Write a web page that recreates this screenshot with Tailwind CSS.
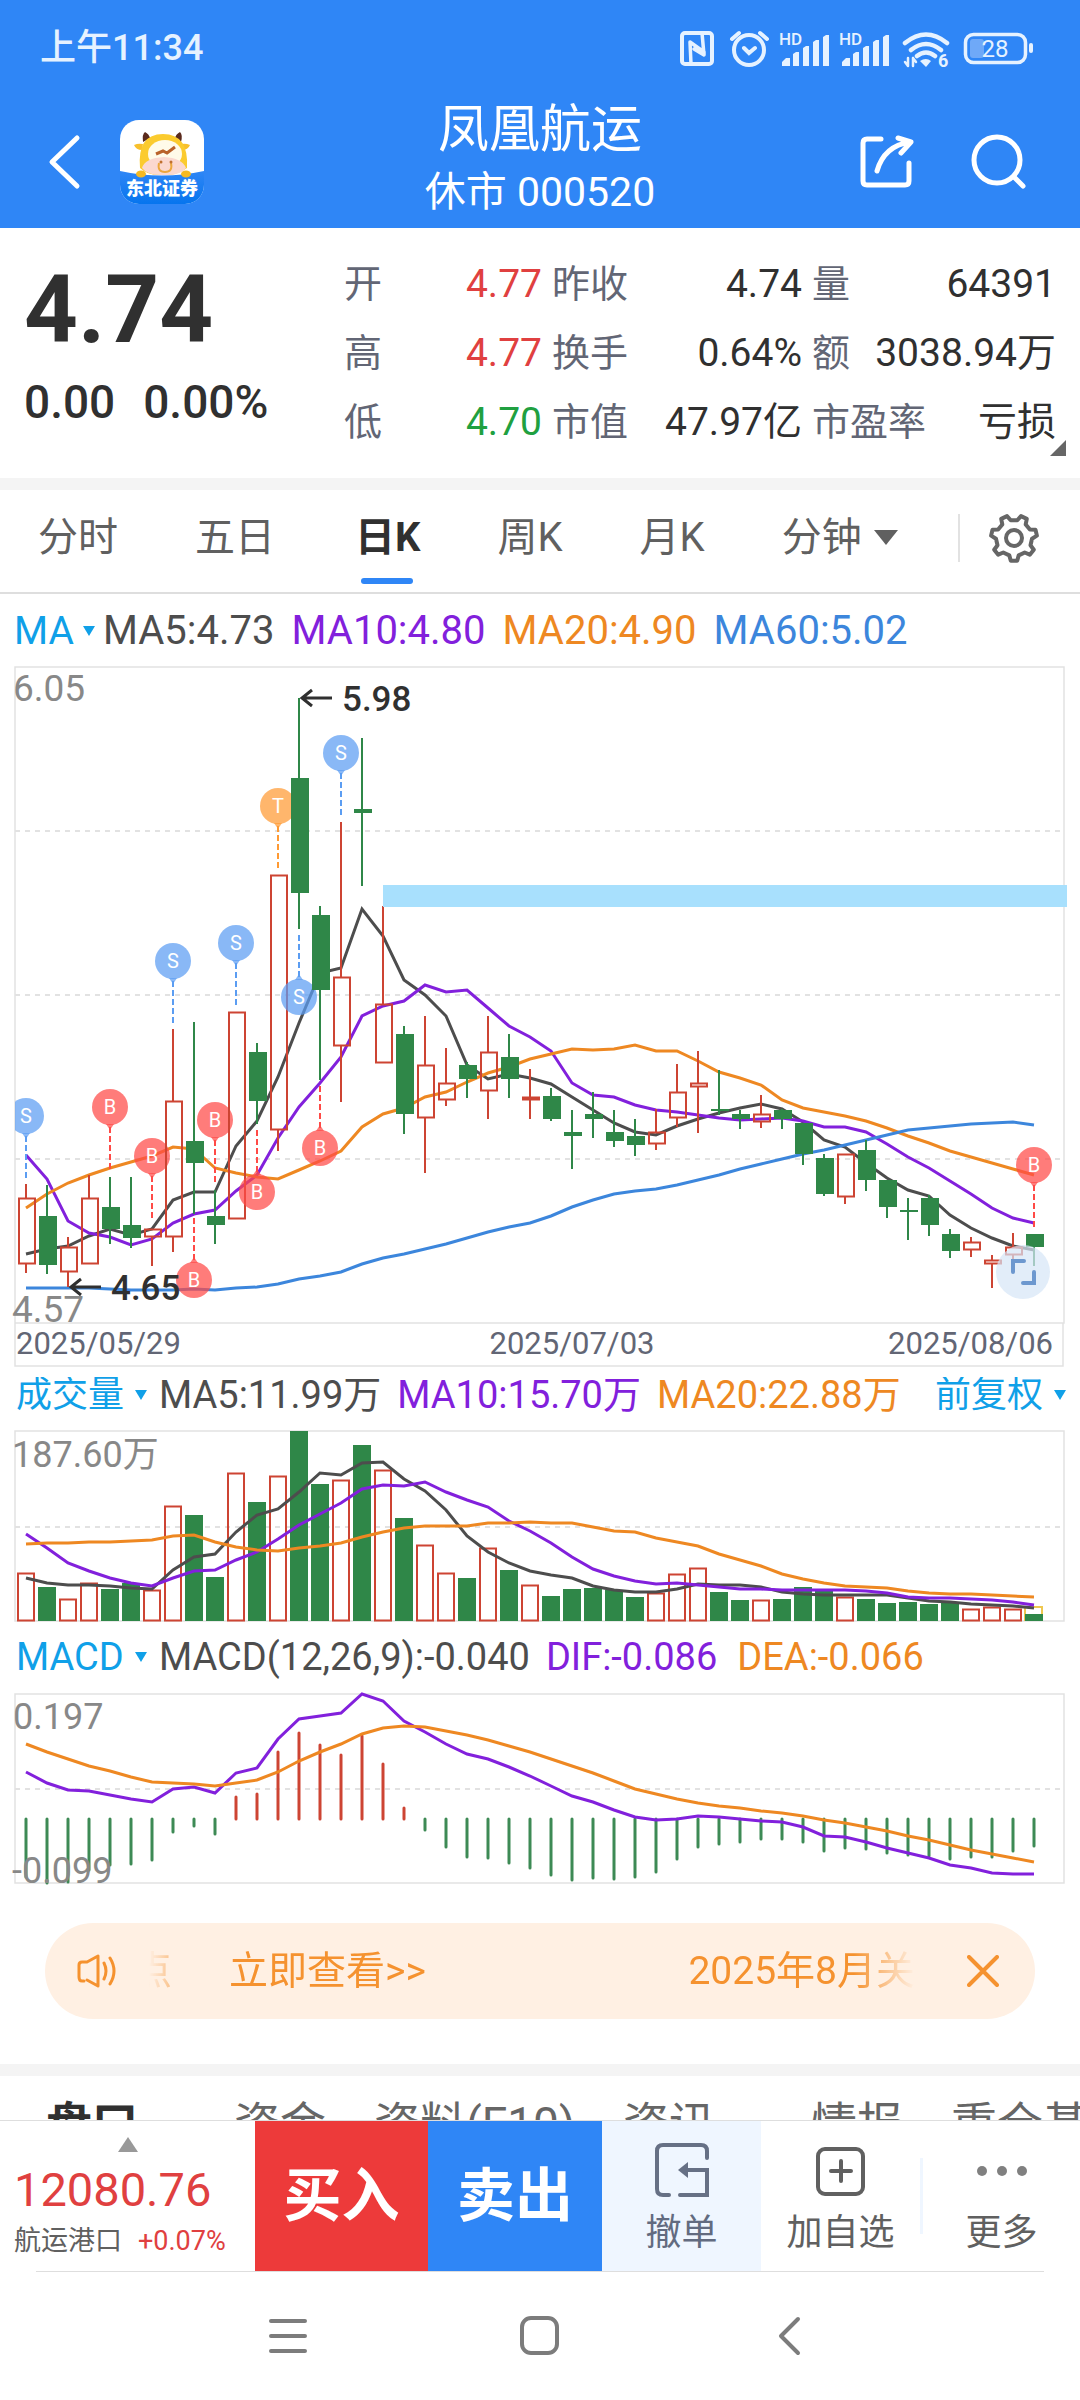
<!DOCTYPE html>
<html lang="zh-CN">
<head>
    <meta charset="UTF-8">
    <meta name="viewport" content="width=device-width, initial-scale=1.0">
    <title>凤凰航运 000520</title>
    <script src="https://cdn.jsdelivr.net/npm/@tailwindcss/browser@4"></script>
</head>
<body class="bg-white font-['Roboto','Noto_Sans_CJK_SC',sans-serif]">
<div class="h-screen flex flex-col overflow-hidden">

    <!-- Header -->
    <header class="shrink-0 bg-[#2f86f6] text-white">
        <div class="flex items-center justify-between h-24 pl-10 pr-11">
            <time class="text-4xl font-medium text-[#e6f2ff]">上午11:34</time>
            <svg class="w-[360px] h-10" viewBox="676 28 360 40" fill="none" stroke="#e6f2ff" stroke-width="4" stroke-linecap="round">
                <!-- nfc -->
                <rect x="682" y="33" width="30" height="31" rx="3"/>
                <path d="M691 64 L690 42 L704 52 L704 55 M702 33 L704 55 L694 49" stroke-linejoin="round" stroke-width="3.500"/>
                <!-- alarm -->
                <circle cx="749" cy="50" r="15"/>
                <path d="M732 39 l7-6 M767 39 l-7-6 M744 48 l5 5 l6-5"/>
                <!-- signal 1 -->
                <g id="signal" stroke="none" fill="#e6f2ff">
                    <path d="M782 66 v-4 l4-4 h4 v8z M793 66 v-12 l3-2 h3 v14z M803 66 v-18 l3-2 h3 v20z M813 66 v-24 l3-2 h3 v26z M823 66 v-29 l3-2 h3 v31z"/>
                    <text x="779" y="45" font-size="17" font-weight="500">HD</text>
                </g>
                <use href="#signal" x="60"/>
                <!-- wifi 6 -->
                <path d="M905 43 q21-17 42 0 M911 50 q15-12 30 0 M917 56 q9-7 18 0" stroke-width="4.500"/>
                <path d="M920 61 q6-4 11 0 l-5 6z" fill="#e6f2ff" stroke="none"/>
                <path d="M908 66 v-8 M908 66 l-3-4 M913 58 v8 M913 58 l3 4" stroke-width="2.500"/>
                <text x="938" y="67" font-size="18" font-weight="700" fill="#e6f2ff" stroke="none">6</text>
                <!-- battery -->
                <rect x="965.500" y="34.500" width="60" height="28" rx="8" stroke-width="3.500"/>
                <rect x="970" y="39" width="14" height="19" rx="3" fill="#6fa9f8" stroke="none"/>
                <path d="M1031 45 v6"/>
                <text x="995" y="57" font-size="24" text-anchor="middle" fill="#e6f2ff" stroke="none">28</text>
            </svg>
        </div>
        <div class="grid grid-cols-[1fr_auto_1fr] items-center h-33 px-11">
            <div class="flex items-center gap-9">
                <button aria-label="返回">
                    <svg class="w-10 h-14" viewBox="0 0 40 56" fill="none" stroke="white" stroke-width="5" stroke-linecap="round" stroke-linejoin="round"><path d="M33 4 L8 28 L33 52"/></svg>
                </button>
                <a href="#" aria-label="东北证券">
                    <svg class="w-21 h-21" viewBox="0 0 84 84">
                        <defs>
                            <clipPath id="logoClip"><rect width="84" height="84" rx="19"/></clipPath>
                            <linearGradient id="logoBlue" x2="0" y2="1"><stop offset="0" stop-color="#2f86f6"/><stop offset="1" stop-color="#0675ee"/></linearGradient>
                        </defs>
                        <g clip-path="url(#logoClip)">
                            <rect width="84" height="84" fill="white"/>
                            <path d="M0 51 Q42 60 84 51 V84 H0z" fill="url(#logoBlue)"/>
                            <path d="M23 22 Q22 14 25 12 Q29 14 30 18z M61 22 Q63 15 60 12 Q56 14 55 18z" fill="#5a2a1c"/>
                            <path d="M14 25 Q18 23 23 24 L22 30 Q16 30 14 25z M70 25 Q66 23 61 24 L62 30 Q68 30 70 25z" fill="#f8c02c"/>
                            <path d="M20 48 Q17 14 43 14 Q69 14 67 48 Q56 56 43 55 Q28 56 20 48z" fill="#fbcb2e"/>
                            <ellipse cx="45" cy="34" rx="17" ry="14" fill="#fffbe9"/>
                            <path d="M36 34 l7-3 l4 2 l8-6" stroke="#b9622a" stroke-width="3" fill="none"/>
                            <path d="M22 48 Q25 38 44 37 Q62 38 66 48 Q60 56 44 55 Q28 56 22 48z" fill="#fbd8cf"/>
                            <path d="M39 43 Q37 52 45 52 Q53 52 51 43" stroke="#eda73c" stroke-width="2" fill="none"/>
                            <circle cx="41" cy="42" r="1.500" fill="#c07030"/><circle cx="51" cy="42" r="1.500" fill="#c07030"/>
                            <ellipse cx="21" cy="54" rx="5" ry="3.500" fill="#f5b921"/><ellipse cx="66" cy="54" rx="5" ry="3.500" fill="#f5b921"/>
                            <text x="42" y="75" font-size="18" font-weight="900" fill="white" text-anchor="middle">东北证券</text>
                        </g>
                    </svg>
                </a>
            </div>
            <div class="text-center">
                <h1 class="text-[51px] leading-15">凤凰航运</h1>
                <p class="text-[41px] leading-16">休市 000520</p>
            </div>
            <div class="flex items-center justify-end gap-14 pr-2.5">
                <button aria-label="分享">
                    <svg class="w-14 h-14" viewBox="0 0 56 56" fill="none" stroke="white" stroke-width="5" stroke-linecap="round" stroke-linejoin="round">
                        <path d="M23 5 H9 Q5 5 5 9 V47 Q5 51 9 51 H47 Q51 51 51 47 V29"/>
                        <path d="M19 37 Q26 12 52 8 M40 4 L53 8 L43 19"/>
                    </svg>
                </button>
                <button aria-label="搜索">
                    <svg class="w-14 h-14" viewBox="0 0 56 56" fill="none" stroke="white" stroke-width="5" stroke-linecap="round"><circle cx="27" cy="26" r="23"/><path d="M44 43 L53 52"/></svg>
                </button>
            </div>
        </div>
    </header>

    <main class="flex-1 min-h-0 overflow-y-auto [scrollbar-width:none]">

        <!-- Quote -->
        <section class="relative flex justify-between pt-[22px] px-6 h-[250px] text-[#303030]">
            <div class="w-72">
                <div class="text-[94px] leading-30 font-bold">4.74</div>
                <div class="flex gap-7 text-[46px] leading-16 font-medium">
                    <span>0.00</span><span>0.00%</span>
                </div>
            </div>
            <dl class="grid grid-cols-[198px_250px_244px] gap-x-2.5 auto-rows-[69px] text-[39px] leading-[69px]">
                <div class="flex justify-between"><dt class="text-[38px] text-[#626675]">开</dt><dd class="text-[#e04040]">4.77</dd></div>
                <div class="flex justify-between"><dt class="text-[38px] text-[#626675]">昨收</dt><dd>4.74</dd></div>
                <div class="flex justify-between"><dt class="text-[38px] text-[#626675]">量</dt><dd>64391</dd></div>
                <div class="flex justify-between"><dt class="text-[38px] text-[#626675]">高</dt><dd class="text-[#e04040]">4.77</dd></div>
                <div class="flex justify-between"><dt class="text-[38px] text-[#626675]">换手</dt><dd>0.64%</dd></div>
                <div class="flex justify-between"><dt class="text-[38px] text-[#626675]">额</dt><dd>3038.94万</dd></div>
                <div class="flex justify-between"><dt class="text-[38px] text-[#626675]">低</dt><dd class="text-[#20a040]">4.70</dd></div>
                <div class="flex justify-between"><dt class="text-[38px] text-[#626675]">市值</dt><dd>47.97亿</dd></div>
                <div class="flex justify-between"><dt class="text-[38px] text-[#626675]">市盈率</dt><dd>亏损</dd></div>
            </dl>
            <svg class="absolute right-3.5 bottom-5.5 w-4 h-4" viewBox="0 0 16 16" fill="#666"><path d="M16 0 V16 H0z"/></svg>
        </section>
        <div class="h-3 bg-[#f4f4f4]"></div>

        <!-- Period tabs -->
        <nav class="flex items-center h-26 pb-1.5 pl-[38px] pr-10 border-b-2 border-[#dedede] text-[40px] text-[#606060]">
            <button class="mr-[77px]">分时</button>
            <button class="mr-[80px]">五日</button>
            <button class="relative mr-[77px] font-bold text-[#303030]">日K
                <span class="absolute left-1.5 -bottom-4 w-13 h-1.5 rounded-full bg-[#2f86f6]"></span>
            </button>
            <button class="mr-[77px]">周K</button>
            <button class="mr-[77px]">月K</button>
            <button class="flex items-center gap-3">分钟
                <svg class="w-6 h-4" viewBox="0 0 24 16" fill="#606060"><path d="M0 0 H24 L12 15z"/></svg>
            </button>
            <span class="ml-auto mr-7 w-0.5 h-12 bg-[#e2e2e2]"></span>
            <button aria-label="设置">
                <svg class="w-13 h-13" viewBox="0 0 52 52" fill="none" stroke="#666" stroke-width="4" stroke-linejoin="round">
                    <path d="M21.300 43.400 L22.800 48.800 H29.200 L30.700 43.400 L36.700 40.500 L41.800 42.700 L45.800 37.700 L42.500 33.200 L44 26.700 L48.900 23.600 L47.500 17.800 L41.900 17.600 L37.700 12.400 L38.800 6.900 L33 4.100 L29.300 8.300 H22.700 L19 4.100 L13.200 6.900 L14.300 12.400 L10.100 17.600 L4.500 17.800 L3.100 23.600 L8 26.700 L9.500 33.200 L6.200 37.700 L10.200 42.700 L15.300 40.500z"/>
                    <circle cx="26" cy="26" r="8"/>
                </svg>
            </button>
        </nav>

        <!-- Price pane -->
        <div class="flex items-center h-[66px] pt-2 pl-3.5 pr-4 text-[40px] leading-none whitespace-nowrap">
            <label class="flex items-center mr-2 text-[#10a0e8]">
                <select aria-label="主图指标" class="appearance-none w-[69px] text-[39px]"><option>MA</option></select>
                <svg class="w-3 h-3" viewBox="0 0 12 12" fill="#10a0e8"><path d="M0 1 H12 L6 11z"/></svg>
            </label>
            <span class="mr-[17px] text-[#4d4d4d]">MA5:4.73</span>
            <span class="mr-[17px] text-[#8220dc]">MA10:4.80</span>
            <span class="mr-[17px] text-[#ee8822]">MA20:4.90</span>
            <span class="text-[#3c86dc]">MA60:5.02</span>
        </div>
        <svg id="price" class="block w-full" viewBox="0 660 1080 710">
            <g fill="none" stroke="#e2e2e2" stroke-width="1.500">
                <path d="M15 667 H1064 V1323 H15z M15 1323 V1366 H1063 V1323"/>
                <path d="M15 831 H1060 M15 995 H1060 M15 1159 H1060" stroke-width="2" stroke-dasharray="5 5"/>
            </g>
            <clipPath id="pane"><rect x="15" y="666" width="1056" height="658"/></clipPath>
            <g id="priceLines" fill="none" stroke-width="3"></g>
            <g id="candles" clip-path="url(#pane)" stroke-width="2"></g>
            <rect x="383" y="885" width="684" height="22" fill="#a8e0fd"/>
            <g font-size="37" fill="#888">
                <text x="13" y="701">6.05</text>
                <text x="12" y="1322">4.57</text>
            </g>
            <g font-size="35" font-weight="500" fill="#303030">
                <text x="342" y="711">5.98</text>
                <text x="111" y="1300">4.65</text>
            </g>
            <path d="M332 698 H302 M312 690 L302 698 L312 706 M101 1287 H71 M81 1279 L71 1287 L81 1295" fill="none" stroke="#303030" stroke-width="3"/>
            <g font-size="31" fill="#626675">
                <text x="16" y="1354">2025/05/29</text>
                <text x="572" y="1354" text-anchor="middle">2025/07/03</text>
                <text x="1053" y="1354" text-anchor="end">2025/08/06</text>
            </g>
            <!-- full screen -->
            <circle cx="1023" cy="1272" r="27" fill="#d6e6f7" fill-opacity=".7"/>
            <path d="M1024 1261 H1013 V1272 M1034 1272 V1283 H1023" fill="none" stroke="#6d98cf" stroke-width="4" stroke-linecap="round"/>
        </svg>

        <!-- Volume pane -->
        <div class="flex items-center h-[50px] pl-4 pr-3.5 text-[38px] leading-none whitespace-nowrap">
            <label class="flex items-center mr-3 text-[36px] text-[#10a0e8]">
                <select aria-label="副图指标一" class="appearance-none w-[119px]"><option>成交量</option></select>
                <svg class="w-3 h-3" viewBox="0 0 12 12" fill="#10a0e8"><path d="M0 1 H12 L6 11z"/></svg>
            </label>
            <span class="mr-4 text-[#4d4d4d]">MA5:11.99万</span>
            <span class="mr-4 text-[#8220dc]">MA10:15.70万</span>
            <span class="mr-4 text-[#ee8822]">MA20:22.88万</span>
            <label class="flex items-center ml-auto text-[36px] text-[#10a0e8]">
                <select aria-label="复权方式" class="appearance-none w-[119px]"><option>前复权</option></select>
                <svg class="w-3 h-3" viewBox="0 0 12 12" fill="#10a0e8"><path d="M0 1 H12 L6 11z"/></svg>
            </label>
        </div>
        <svg class="block w-full" viewBox="0 1420 1080 212">
            <g fill="none" stroke="#e2e2e2" stroke-width="1.500">
                <path d="M15 1431 H1064 V1621 H15z"/>
                <path d="M15 1527 H1060" stroke-width="2" stroke-dasharray="5 5"/>
            </g>
            <rect x="1025" y="1607" width="17" height="13" fill="none" stroke="#efc850" stroke-width="2"/>
            <g id="volumeBars" stroke-width="2"></g>
            <g id="volumeLines" fill="none" stroke-width="3"></g>
            <text x="12" y="1467" font-size="36" fill="#888">187.60万</text>
        </svg>

        <!-- MACD pane -->
        <div class="flex items-center h-[50px] px-4 text-[38px] leading-none whitespace-nowrap">
            <label class="flex items-center mr-3 text-[#10a0e8]">
                <select aria-label="副图指标二" class="appearance-none w-[119px]"><option>MACD</option></select>
                <svg class="w-3 h-3" viewBox="0 0 12 12" fill="#10a0e8"><path d="M0 1 H12 L6 11z"/></svg>
            </label>
            <span class="mr-4 text-[#4d4d4d]">MACD(12,26,9):-0.040</span>
            <span class="mr-5 text-[#8220dc]">DIF:-0.086</span>
            <span class="text-[#ee8822]">DEA:-0.066</span>
        </div>
        <svg class="block w-full" viewBox="0 1682 1080 211">
            <g fill="none" stroke="#e2e2e2" stroke-width="1.500">
                <path d="M15 1694 H1064 V1883 H15z"/>
                <path d="M15 1789 H1060" stroke-width="2" stroke-dasharray="5 5"/>
            </g>
            <g id="macdBars" stroke-width="3" stroke-linecap="round"></g>
            <g id="macdLines" fill="none" stroke-width="3"></g>
            <g font-size="36" fill="#888">
                <text x="13" y="1729">0.197</text>
                <text x="12" y="1883">-0.099</text>
            </g>
        </svg>

        <!-- Notice -->
        <div class="flex items-center h-24 mx-[45px] mt-[30px] mb-[45px] pl-8 pr-9 rounded-full bg-[#fff0e3] text-[39px] text-[#f5922f]">
            <svg class="w-10 h-10" viewBox="0 0 40 40" fill="none" stroke="#f5922f" stroke-width="3" stroke-linecap="round" stroke-linejoin="round">
                <path d="M7 30 H5 Q2 30 2 26 V14 Q2 11 5 11 H10 L21 5 V35 L10 29"/>
                <path d="M27 12 Q31 20 27 28 M33 7 Q41 20 33 33"/>
            </svg>
            <div class="flex-1 flex overflow-hidden ml-8 mr-13 whitespace-nowrap mask-linear-[90deg,transparent,black_6%,black_92%,transparent]">
                <span class="-ml-4 w-10 shrink-0 mr-14">点</span>
                <a href="#" class="shrink-0">立即查看&gt;&gt;</a>
                <span class="ml-auto shrink-0">2025年8月关</span>
            </div>
            <button aria-label="关闭">
                <svg class="w-8 h-8" viewBox="0 0 32 32" fill="none" stroke="#f5922f" stroke-width="4" stroke-linecap="round"><path d="M2 2 L30 30 M30 2 L2 30"/></svg>
            </button>
        </div>
        <div class="h-3 bg-[#f4f4f4]"></div>

        <!-- Detail tabs -->
        <nav class="flex pt-3.5 pl-[46px] text-[46px] text-[#666] whitespace-nowrap overflow-hidden">
            <button class="mr-24 font-bold text-[#303030]">盘口</button>
            <button class="mr-12">资金</button>
            <button class="mr-12">资料(F10)</button>
            <button class="mr-24">资讯</button>
            <button class="mr-12">情报</button>
            <button>重仓基金</button>
        </nav>
    </main>

    <!-- Trade bar -->
    <div class="shrink-0 flex h-[151px] border-t border-[#dedede]">
        <a href="#" class="w-[255px] flex flex-col pl-3.5">
            <svg class="w-5 h-4 ml-[104px] mt-4" viewBox="0 0 20 16" fill="#999"><path d="M10 0 L20 15 H0z"/></svg>
            <span class="text-[47px] leading-[66px] mt-1 text-[#e04040]">12080.76</span>
            <span class="flex gap-4 text-[27px] leading-9 text-[#606060]">航运港口 <span class="text-[#e04040]">+0.07%</span></span>
        </a>
        <button class="w-[173px] bg-[#ed3a3a] text-white text-[58px] font-bold">买入</button>
        <button class="w-[174px] bg-[#2f86f6] text-white text-[58px] font-bold">卖出</button>
        <button class="w-[159px] flex flex-col items-center pt-5 gap-2 bg-[#eff6ff] text-4xl leading-14 text-[#626b80]">
            <svg class="w-14 h-14" viewBox="0 0 56 56" fill="none" stroke="#667085" stroke-width="4" stroke-linecap="round">
                <path d="M53 17 V10 Q53 4 47 4 H9 Q3 4 3 10 V48 Q3 54 9 54 H15 M26 54 H53 V29 H30"/>
                <path d="M34 21 L24 29 L34 37z" fill="#667085" stroke="none"/>
            </svg>
            撤单
        </button>
        <button class="w-[159px] flex flex-col items-center pt-5 gap-2 text-4xl leading-14 text-[#606060]">
            <svg class="w-14 h-14" viewBox="0 0 56 56" fill="none" stroke="#606060" stroke-width="4" stroke-linecap="round">
                <rect x="5" y="8" width="45" height="45" rx="7"/><path d="M28 20 V40 M18 30 H38"/>
            </svg>
            加自选
        </button>
        <span class="self-center w-[3px] h-19 bg-[#eff6ff]"></span>
        <button class="flex-1 flex flex-col items-center pt-5 gap-2 text-4xl leading-14 text-[#606060]">
            <svg class="w-14 h-14" viewBox="0 0 56 56" fill="#808080"><circle cx="8" cy="30" r="5"/><circle cx="28" cy="30" r="5"/><circle cx="48" cy="30" r="5"/></svg>
            更多
        </button>
    </div>

    <!-- System navigation -->
    <div class="shrink-0 mx-9 h-[129px] border-t border-[#dedede] flex items-center justify-center gap-[212px]">
        <button aria-label="最近任务"><svg class="w-10 h-10" viewBox="0 0 40 40" stroke="#7c7c7c" stroke-width="4" stroke-linecap="round"><path d="M3 5 H37 M3 20 H37 M3 35 H37"/></svg></button>
        <button aria-label="主屏幕"><svg class="w-10 h-10" viewBox="0 0 40 40" fill="none" stroke="#7c7c7c" stroke-width="4"><rect x="2" y="2" width="35" height="35" rx="9"/></svg></button>
        <button aria-label="返回"><svg class="w-10 h-10" viewBox="0 0 40 40" fill="none" stroke="#7c7c7c" stroke-width="4" stroke-linecap="round" stroke-linejoin="round"><path d="M26 3 L9 20 L26 37"/></svg></button>
    </div>
</div>

<script>
    const STEP = 21;
    const RED = '#cd4433';
    const GREEN = '#2f8748';
    const xAt = (i) => 26 + STEP * i;

    // direction, high, body top, body bottom, low (the three panes share one y axis)
    const candles = [
        ['r',1184,1198,1264,1273],['g',1185,1216,1265,1274],['r',1237,1247,1272,1287],['r',1175,1198,1264,1264],
        ['g',1177,1207,1229,1244],['g',1177,1225,1238,1248],['r',1229,1229,1237,1266],['r',1029,1101,1237,1252],
        ['g',1022,1141,1163,1214],['g',1190,1216,1225,1244],['r',1012,1012,1219,1219],['g',1043,1052,1101,1124],
        ['r',875,875,1130,1151],['g',698,778,893,929],['g',906,915,990,1080],['r',822,977,1046,1102],
        ['g',738,809,813,886],['r',906,1004,1063,1063],['g',1026,1034,1114,1134],['r',1016,1065,1118,1173],
        ['r',1048,1083,1100,1106],['g',1062,1065,1079,1098],['r',1016,1052,1091,1119],['g',1034,1057,1079,1098],
        ['r',1069,1097,1100,1119],['g',1088,1096,1119,1121],['g',1110,1132,1136,1169],['g',1092,1114,1119,1138],
        ['g',1110,1132,1141,1147],['g',1119,1136,1145,1156],['r',1109,1132,1144,1150],['r',1064,1092,1118,1127],
        ['r',1051,1083,1087,1133],['g',1070,1109,1111,1115],['g',1110,1114,1119,1129],['r',1095,1114,1122,1128],
        ['g',1109,1110,1119,1129],['g',1123,1123,1154,1165],['g',1154,1158,1194,1196],['r',1154,1154,1197,1204],
        ['g',1140,1150,1180,1191],['g',1180,1180,1207,1218],['g',1198,1210,1212,1240],['g',1195,1198,1225,1236],
        ['g',1229,1234,1251,1258],['r',1237,1242,1250,1257],['r',1255,1260,1264,1288],['r',1233,1247,1255,1260],
        ['g',1234,1234,1247,1266]
    ];

    // candle index: letter, circle centre, far end of the dashed stem
    const markers = {
        0: ['S',1116,1180], 4: ['B',1107,1170], 6: ['B',1156,1219], 7: ['S',961,1024], 8: ['B',1280,1217],
        9: ['B',1120,1183], 10: ['S',943,1006], 11: ['B',1192,1129], 12: ['T',806,869], 13: ['S',997,934],
        14: ['B',1148,1085], 15: ['S',753,816], 48: ['B',1165,1228]
    };
    const markerColor = { S: '#5b9df2', B: '#ff4a46', T: '#ff9a33' };

    const priceLines = {
        '#4d4d4d': [1254,1249,1246,1236,1229,1235,1229,1200,1192,1192,1146,1121,1077,1023,973,968,909,936,980,995,1016,1065,1079,1074,1078,1084,1097,1110,1123,1132,1135,1126,1119,1113,1108,1104,1109,1122,1140,1147,1163,1178,1190,1196,1215,1228,1238,1246,1250],
        '#8220dc': [1155,1179,1221,1233,1237,1245,1239,1223,1214,1210,1191,1175,1138,1107,1083,1057,1016,1006,1001,985,992,990,1008,1026,1037,1051,1083,1095,1097,1105,1110,1112,1115,1118,1120,1119,1118,1121,1127,1127,1132,1144,1157,1168,1181,1194,1208,1218,1223],
        '#ee8822': [1208,1194,1183,1175,1168,1162,1156,1147,1149,1168,1173,1177,1179,1170,1161,1151,1127,1114,1108,1097,1092,1082,1073,1067,1059,1054,1049,1050,1049,1045,1051,1051,1061,1072,1078,1085,1100,1108,1112,1116,1121,1128,1136,1143,1151,1157,1163,1169,1175],
        '#3c86dc': [1288,1288,1288,1288,1289,1290,1290,1290,1289,1290,1288,1287,1284,1279,1276,1272,1264,1258,1254,1249,1244,1238,1232,1227,1223,1216,1207,1200,1194,1191,1189,1185,1180,1175,1169,1164,1159,1154,1150,1145,1140,1135,1130,1128,1126,1124,1123,1122,1125]
    };

    const volumes = [1573,1587,1599,1583,1589,1583,1590,1506,1515,1577,1473,1502,1476,1431,1484,1480,1445,1470,1518,1545,1573,1578,1548,1570,1585,1596,1589,1588,1590,1597,1593,1574,1568,1592,1600,1600,1599,1587,1591,1597,1599,1603,1602,1604,1603,1609,1607,1609,1614];
    const volumeLines = {
        '#4d4d4d': [1578,1583,1585,1585,1586,1588,1589,1570,1557,1554,1532,1515,1509,1492,1473,1475,1463,1462,1479,1491,1510,1536,1552,1563,1571,1575,1578,1586,1590,1592,1592,1589,1584,1585,1585,1587,1592,1594,1595,1595,1595,1595,1598,1601,1602,1604,1605,1606,1608],
        '#8220dc': [1534,1548,1563,1571,1578,1583,1586,1578,1571,1570,1560,1552,1539,1525,1514,1503,1489,1485,1486,1482,1492,1500,1507,1521,1531,1543,1557,1569,1576,1581,1584,1583,1585,1587,1589,1589,1590,1590,1590,1590,1591,1593,1597,1598,1598,1599,1600,1602,1605],
        '#ee8822': [1544,1543,1543,1542,1542,1541,1540,1536,1535,1542,1547,1550,1551,1548,1546,1543,1537,1532,1528,1526,1526,1526,1523,1523,1522,1523,1523,1527,1531,1532,1538,1542,1546,1554,1560,1566,1574,1579,1583,1586,1587,1588,1591,1593,1594,1594,1595,1596,1597]
    };

    const macd = [1877,1883,1882,1870,1865,1864,1860,1832,1826,1834,1797,1794,1752,1733,1745,1755,1736,1764,1808,1830,1847,1857,1858,1863,1868,1875,1880,1878,1879,1877,1872,1859,1847,1844,1842,1839,1839,1842,1851,1848,1849,1853,1855,1856,1859,1857,1857,1851,1846];
    const macdLines = {
        '#8220dc': [1772,1783,1790,1791,1795,1799,1802,1789,1787,1793,1773,1768,1739,1719,1716,1713,1694,1701,1721,1732,1744,1754,1759,1767,1776,1786,1796,1802,1810,1817,1820,1819,1816,1817,1819,1821,1822,1827,1836,1837,1842,1848,1853,1858,1865,1868,1873,1874,1874],
        '#ee8822': [1744,1752,1759,1766,1771,1777,1782,1783,1784,1786,1783,1780,1772,1761,1752,1744,1734,1728,1726,1727,1731,1735,1740,1746,1752,1759,1766,1773,1781,1789,1794,1799,1803,1806,1808,1811,1813,1816,1820,1823,1827,1831,1836,1840,1845,1850,1854,1858,1862]
    };

    function drawLines(id, lines) {
        document.getElementById(id).innerHTML = Object.entries(lines).map(([color, ys]) =>
            `<polyline stroke="${color}" points="${ys.map((y, i) => xAt(i) + ',' + y).join(' ')}"/>`
        ).join('');
    }

    function box(kind, x, top, bottom) {
        return kind === 'g'
            ? `<rect x="${x}" y="${top}" width="18" height="${bottom - top}" fill="${GREEN}"/>`
            : `<rect x="${x + 1}" y="${top + 0.5}" width="16" height="${bottom - top - 1}" fill="none" stroke="${RED}"/>`;
    }

    function marker([letter, cy, end], x) {
        const color = markerColor[letter];
        const side = end > cy ? 1 : -1;
        return `<path d="M${x} ${cy + side * 20} V${end}" stroke="${color}" stroke-dasharray="6 3"/>
            <circle cx="${x}" cy="${cy}" r="18" fill="${color}" fill-opacity=".72"/>
            <path d="M${x - 4} ${cy + side * 17} L${x} ${cy + side * 23} L${x + 4} ${cy + side * 17}z" fill="${color}" fill-opacity=".72"/>
            <text x="${x}" y="${cy + 7}" font-size="20" fill="white" text-anchor="middle">${letter}</text>`;
    }

    drawLines('priceLines', priceLines);
    drawLines('volumeLines', volumeLines);
    drawLines('macdLines', macdLines);

    document.getElementById('candles').innerHTML = candles.map(([kind, high, top, bottom, low], i) => {
        const x = xAt(i);
        const color = kind === 'g' ? GREEN : RED;
        return `<path d="M${x} ${high} V${top} M${x} ${bottom} V${low}" stroke="${color}"/>`
            + box(kind, x - 8, top, bottom)
            + (markers[i] ? marker(markers[i], x) : '');
    }).join('');

    document.getElementById('volumeBars').innerHTML = volumes.map((top, i) =>
        box(candles[i][0], xAt(i) - 9, top, 1621)
    ).join('');

    document.getElementById('macdBars').innerHTML = macd.map((y, i) =>
        `<path d="M${xAt(i)} ${y} V1819" stroke="${y < 1819 ? RED : '#3d8a55'}"/>`
    ).join('');
</script>
</body>
</html>
